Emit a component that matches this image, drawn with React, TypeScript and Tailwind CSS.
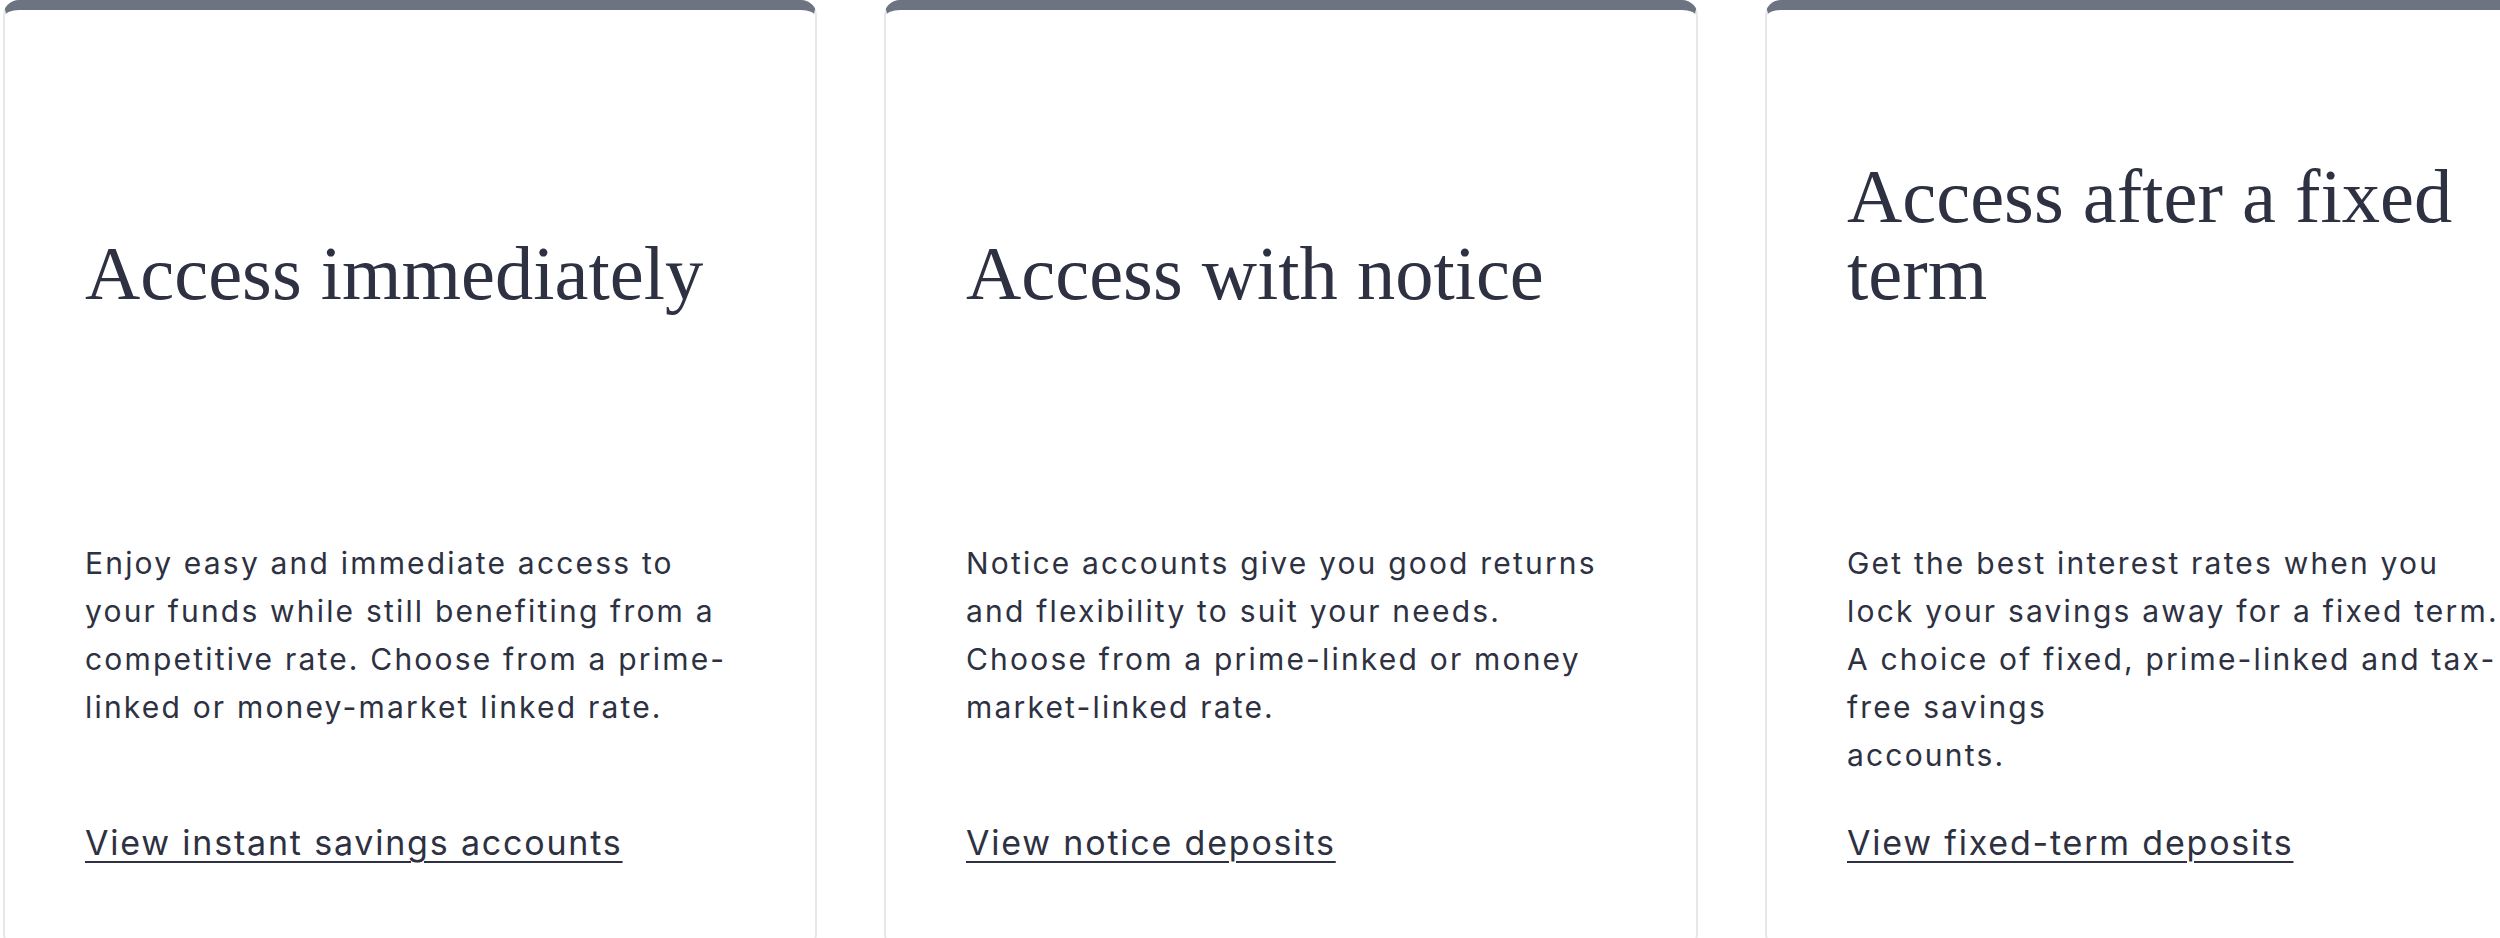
import React from 'react';

interface AccessOption {
  title: string;
  body: React.ReactNode;
  linkLabel: string;
}

const options: AccessOption[] = [
  {
    title: 'Access immediately',
    body: 'Enjoy easy and immediate access to your funds while still benefiting from a competitive rate. Choose from a prime-linked or money-market linked rate.',
    linkLabel: 'View instant savings accounts',
  },
  {
    title: 'Access with notice',
    body: 'Notice accounts give you good returns and flexibility to suit your needs. Choose from a prime-linked or money market-linked rate.',
    linkLabel: 'View notice deposits',
  },
  {
    title: 'Access after a fixed term',
    body: (
      <>
        Get the best interest rates when you
        <br />
        <span className="whitespace-nowrap">lock your savings away for a fixed term.</span>
        <br />
        A choice of fixed, prime-linked and tax-free savings
        <br />
        accounts.
      </>
    ),
    linkLabel: 'View fixed-term deposits',
  },
];

const OptionCard: React.FC<{ option: AccessOption }> = ({ option }) => (
  <div className="w-[814px] shrink-0 flex flex-col rounded-[16px] border-x-2 border-b-2 border-t-[10px] border-[#e6e7e9] border-t-[#6e7381] bg-white px-[80px] pb-[80px]">
    <div className="h-[302px] flex items-end">
      <h2 className="font-['Liberation_Serif',serif] text-[76.5px] leading-none font-normal text-[#2d3142]">
        {option.title}
      </h2>
    </div>
    <p className="mt-[227px] min-h-[240px] font-['Inter',sans-serif] text-[30px] leading-[48px] tracking-[0.073em] text-[#2d3142]">
      {option.body}
    </p>
    <a
      href="#"
      className="mt-[38px] self-start font-['Inter',sans-serif] text-[34px] leading-[51px] tracking-[0.053em] text-[#2d3142] underline decoration-2 underline-offset-[6px]"
    >
      {option.linkLabel}
    </a>
  </div>
);

export default function App() {
  return (
    <div className="h-[938px] w-full overflow-hidden bg-white">
      <div className="flex gap-[67px] pl-[3px]">
        {options.map((option) => (
          <OptionCard key={option.title} option={option} />
        ))}
      </div>
    </div>
  );
}
